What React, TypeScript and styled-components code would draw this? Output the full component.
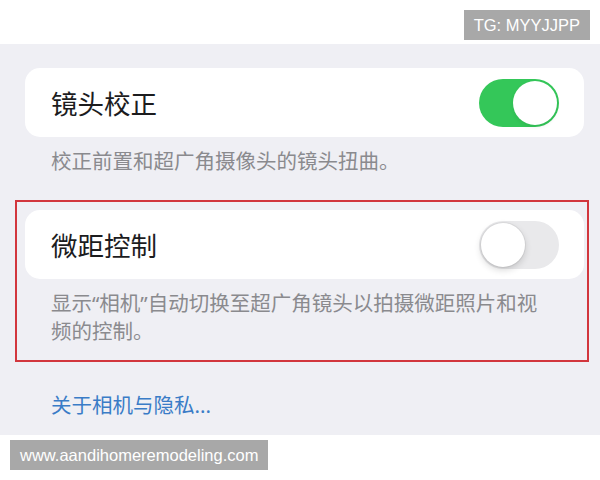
import React from "react";
import styled, { createGlobalStyle } from "styled-components";

const GlobalStyle = createGlobalStyle`
  html, body {
    margin: 0;
    padding: 0;
    background: #ffffff;
  }
  body {
    font-family: "Noto Sans", "Noto Sans CJK SC", sans-serif;
  }
`;

type Setting = {
  title: string;
  desc: string;
  on: boolean;
  marked?: boolean;
};

const settings: Setting[] = [
  { title: "镜头校正", desc: "校正前置和超广角摄像头的镜头扭曲。", on: true },
  {
    title: "微距控制",
    desc: "显示“相机”自动切换至超广角镜头以拍摄微距照片和视频的控制。",
    on: false,
    marked: true,
  },
];

export default function App() {
  return (
    <>
      <GlobalStyle />
      <Page>
        <TopBar>
          <Tag>TG: MYYJJPP</Tag>
        </TopBar>

        <SettingsArea>
          {settings.map((item) => (
            <Group key={item.title} $marked={item.marked}>
              <Card>
                <Title>{item.title}</Title>
                <Switch $on={item.on}>
                  <Knob $on={item.on} />
                </Switch>
              </Card>
              <Footnote>{item.desc}</Footnote>
            </Group>
          ))}
          <PrivacyLink>关于相机与隐私...</PrivacyLink>
        </SettingsArea>

        <BottomBar>
          <Tag>www.aandihomeremodeling.com</Tag>
        </BottomBar>
      </Page>
    </>
  );
}

const Page = styled.div`
  width: 600px;
  height: 480px;
  overflow: hidden;
  display: flex;
  flex-direction: column;
`;

const TopBar = styled.div`
  height: 44px;
  box-sizing: border-box;
  padding: 10px 10px 0 0;
  display: flex;
  justify-content: flex-end;
  align-items: flex-start;
  background: #ffffff;
`;

const Tag = styled.div`
  height: 30px;
  padding: 0 10px;
  display: flex;
  align-items: center;
  background: #a8a8a8;
  color: #ffffff;
  font-family: "Liberation Sans", Arial, sans-serif;
  font-size: 16.5px;
  white-space: nowrap;
`;

const SettingsArea = styled.div`
  height: 391px;
  box-sizing: border-box;
  padding: 14px 11px 0 15px;
  background: #efeff4;
  display: flex;
  flex-direction: column;
  gap: 8px;
`;

const Group = styled.div<{ $marked?: boolean }>`
  border: 2px solid ${(p) => (p.$marked ? "#d2363d" : "transparent")};
  padding: 8px 3px 15px 8px;
`;

const Card = styled.div`
  height: 69px;
  box-sizing: border-box;
  padding: 0 25px 0 26px;
  border-radius: 15px;
  background: #ffffff;
  display: flex;
  align-items: center;
  justify-content: space-between;
`;

const Title = styled.div`
  font-size: 26.5px;
  color: #1c1c1e;
`;

const Switch = styled.div<{ $on: boolean }>`
  width: 80px;
  height: 48px;
  border-radius: 24px;
  box-sizing: border-box;
  padding: 2px;
  background: ${(p) => (p.$on ? "#34c759" : "#e9e9eb")};
  display: flex;
  justify-content: ${(p) => (p.$on ? "flex-end" : "flex-start")};
`;

const Knob = styled.div<{ $on: boolean }>`
  width: 44px;
  height: 44px;
  border-radius: 50%;
  background: #ffffff;
  box-shadow: ${(p) =>
    p.$on
      ? "0 2px 4px rgba(0, 0, 0, 0.08)"
      : "0 3px 7px rgba(0, 0, 0, 0.16), 0 0 0 1px rgba(0, 0, 0, 0.05)"};
`;

const Footnote = styled.div`
  padding: 10px 34px 0 26px;
  font-size: 20.5px;
  line-height: 28px;
  color: #8a8a8e;
`;

const PrivacyLink = styled.div`
  margin-top: 21px;
  padding-left: 36px;
  font-size: 20.5px;
  line-height: 28px;
  color: #3a7cc7;
`;

const BottomBar = styled.div`
  flex: 1;
  padding: 5px 0 0 10px;
  display: flex;
  align-items: flex-start;
  background: #ffffff;
`;
